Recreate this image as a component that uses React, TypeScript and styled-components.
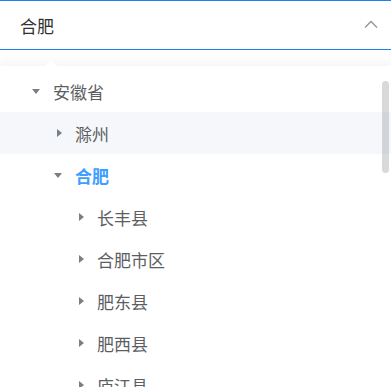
import styled, { createGlobalStyle } from "styled-components";

const GlobalStyle = createGlobalStyle`
  html, body {
    margin: 0;
    padding: 0;
    background: #fff;
    overflow: hidden;
  }
  body {
    font-family: "Noto Sans CJK SC", "Noto Sans", sans-serif;
  }
`;

type Node = {
  label: string;
  level: number;
  expanded?: boolean;
  active?: boolean;
  hover?: boolean;
};

const nodes: Node[] = [
  { label: "安徽省", level: 1, expanded: true },
  { label: "滁州", level: 2, hover: true },
  { label: "合肥", level: 2, expanded: true, active: true },
  { label: "长丰县", level: 3 },
  { label: "合肥市区", level: 3 },
  { label: "肥东县", level: 3 },
  { label: "肥西县", level: 3 },
  { label: "庐江县", level: 3 },
];

function App() {
  return (
    <>
      <GlobalStyle />
      <Page>
        <SelectInput>
          <span>合肥</span>
          <svg width="14" height="8" viewBox="0 0 14 8">
            <polyline
              points="1,7.5 7,1.5 13,7.5"
              fill="none"
              stroke="#8c939d"
              strokeWidth="1.3"
            />
          </svg>
        </SelectInput>
        <Dropdown>
          <PopperArrow />
          <TreeList>
            {nodes.map((n) => (
              <TreeRow key={n.label} $level={n.level} $hover={n.hover}>
                <Caret $expanded={n.expanded} />
                <Label $active={n.active}>{n.label}</Label>
              </TreeRow>
            ))}
          </TreeList>
          <ScrollThumb />
        </Dropdown>
      </Page>
    </>
  );
}

const Page = styled.div`
  display: flex;
  flex-direction: column;
  height: 387px;
`;

const SelectInput = styled.div`
  box-sizing: border-box;
  flex-shrink: 0;
  height: 50px;
  margin: 0 -4px;
  padding: 0 16px 0 23px;
  border: 1px solid #1f7ef0;
  border-radius: 4px;
  display: flex;
  align-items: center;
  justify-content: space-between;
  font-size: 17px;
  line-height: 1;
  color: #303133;

  svg {
    margin-bottom: 2px;
  }
`;

const Dropdown = styled.div`
  position: relative;
  margin: 16px -4px 0;
  flex: 1;
  min-height: 0;
  background: #fff;
  box-shadow: 0 0 16px rgba(0, 0, 0, 0.07);
`;

const PopperArrow = styled.div`
  position: absolute;
  top: -6px;
  left: 49px;
  width: 0;
  height: 0;
  border-left: 6px solid transparent;
  border-right: 6px solid transparent;
  border-bottom: 6px solid #fff;
`;

const TreeList = styled.div`
  display: flex;
  flex-direction: column;
  padding-top: 4px;
`;

const TreeRow = styled.div<{ $level: number; $hover?: boolean }>`
  flex-shrink: 0;
  height: 42px;
  display: flex;
  align-items: center;
  gap: 6px;
  padding-left: ${(p) => 29 + (p.$level - 1) * 22}px;
  background: ${(p) => (p.$hover ? "#f5f7fa" : "transparent")};
`;

const Caret = styled.span<{ $expanded?: boolean }>`
  width: 22px;
  height: 22px;
  display: flex;
  align-items: center;
  justify-content: center;

  &::before {
    content: "";
    width: 0;
    height: 0;
    border-style: solid;
    ${(p) =>
      p.$expanded
        ? "border-width: 5px 4px 0 4px; border-color: #778089 transparent transparent transparent; margin-top: 1px;"
        : "border-width: 4px 0 4px 5px; border-color: transparent transparent transparent #778089; margin-left: 2px;"}
  }
`;

const Label = styled.span<{ $active?: boolean }>`
  font-size: 17px;
  line-height: 1;
  color: ${(p) => (p.$active ? "#409eff" : "#5b5e63")};
  font-weight: ${(p) => (p.$active ? 700 : 400)};
`;

const ScrollThumb = styled.div`
  position: absolute;
  top: 15px;
  right: 6px;
  width: 7px;
  height: 92px;
  border-radius: 4px;
  background: rgba(144, 147, 153, 0.35);
`;

export default App;
